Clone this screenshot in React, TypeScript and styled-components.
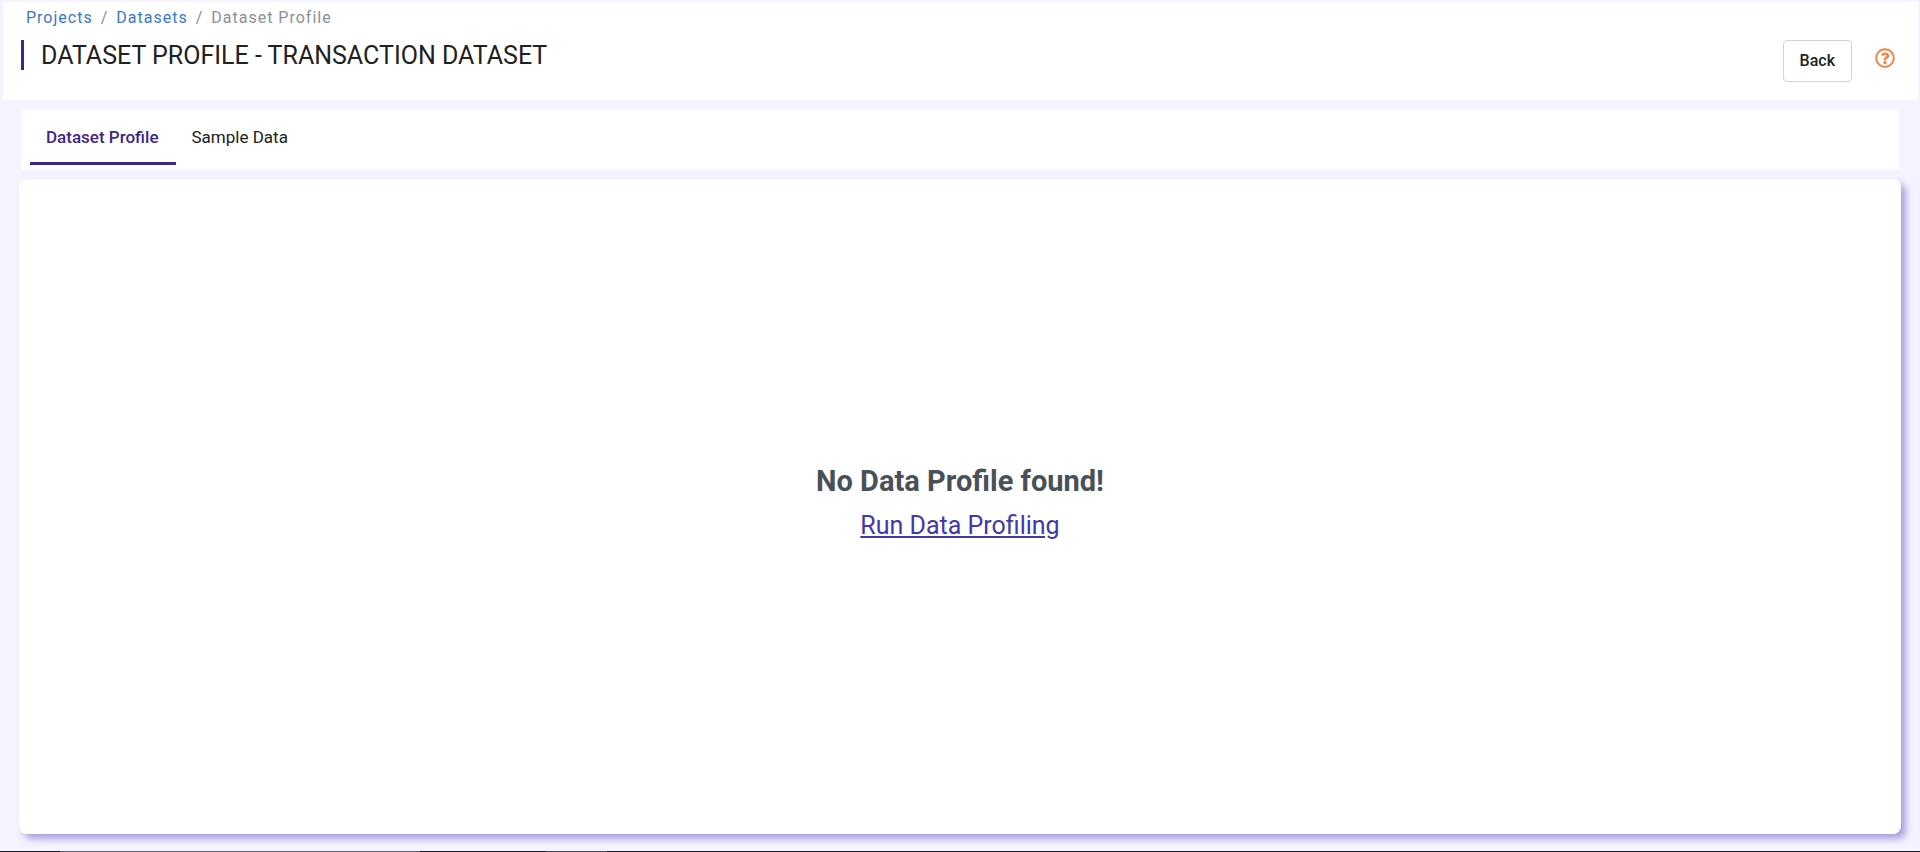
import React from "react";
import styled, { createGlobalStyle } from "styled-components";
import { FaRegQuestionCircle } from "react-icons/fa";

const GlobalStyle = createGlobalStyle`
  *, *::before, *::after { box-sizing: border-box; }
  body {
    margin: 0;
    background: #f5f3ff;
    color: #212121;
    font-family: Roboto, "Liberation Sans", sans-serif;
    font-size: 16px;
    line-height: 24px;
  }
`;

const Page = styled.div`
  display: flex;
  flex-direction: column;
  min-height: 100vh;
  padding-top: 2px;
`;

const Header = styled.header`
  display: flex;
  justify-content: space-between;
  height: 98px;
  margin: 0 2px 0 3px;
  padding: 4px 23px 0 18px;
  background: #fff;
`;

const Breadcrumb = styled.ol`
  display: flex;
  gap: 8px;
  margin: 0;
  padding: 0 0 0 5px;
  list-style: none;
  letter-spacing: 1px;
  color: #8a9097;
`;

const Crumb = styled.li`
  display: flex;
  gap: 8px;

  & + &::before { content: "/"; }
`;

const CrumbLink = styled.a`
  color: #3a77c9;
  text-decoration: none;
`;

const Title = styled.h1`
  margin: 10px 0 0;
  padding: 1px 0 0 17px;
  border-left: 3px solid #3f2687;
  font-size: 25px;
  font-weight: 400;
  line-height: 29px;
`;

const Actions = styled.div`
  display: flex;
  align-items: flex-start;
  gap: 23px;
  padding-top: 34px;
`;

const BackButton = styled.button`
  height: 42px;
  padding: 0 16px;
  border: 1px solid #ced4da;
  border-radius: 4px;
  background: #fff;
  color: #212121;
  font: 500 16px/24px Roboto, sans-serif;
`;

const HelpButton = styled.button`
  display: flex;
  margin-top: 8px;
  padding: 0;
  border: 0;
  background: none;
  color: #fb7e3f;
  font-size: 20px;
`;

const Tabs = styled.nav`
  display: flex;
  height: 61px;
  margin: 9px 21px;
  padding: 0 9px;
  border-radius: 4px;
  background: #fff;
`;

const Tab = styled.a<{ $active?: boolean }>`
  height: 56px;
  padding: 16px 17px 0 16px;
  border-bottom: 3px solid ${(p) => (p.$active ? "#3f2687" : "transparent")};
  color: ${(p) => (p.$active ? "#3f2687" : "#212121")};
  font-size: 17px;
  font-weight: ${(p) => (p.$active ? 500 : 400)};
  text-decoration: none;
`;

const Panel = styled.main`
  display: flex;
  flex: 1;
  flex-direction: column;
  align-items: center;
  justify-content: center;
  gap: 9px;
  margin: 0 19px 17px;
  padding-bottom: 6px;
  border-radius: 8px;
  background: #fff;
  box-shadow: 5px 5px 7px #aaa0df;
`;

const EmptyTitle = styled.h2`
  margin: 0;
  color: #495057;
  font-size: 29px;
  font-weight: 700;
  line-height: 36px;
`;

const RunLink = styled.a`
  color: #4338a8;
  font-size: 25px;
  line-height: 36px;
`;

const BottomStrip = styled.footer`
  height: 1px;
  background: linear-gradient(
    90deg,
    #1c1826 60px,
    #65616c 60px 420px,
    #1c1826 420px 546px,
    #4b4752 546px 607px,
    #1c1826 607px
  );
`;

export default function App() {
  return (
    <Page>
      <GlobalStyle />
      <Header>
        <div>
          <nav aria-label="Breadcrumb">
            <Breadcrumb>
              <Crumb><CrumbLink href="#projects">Projects</CrumbLink></Crumb>
              <Crumb><CrumbLink href="#datasets">Datasets</CrumbLink></Crumb>
              <Crumb aria-current="page">Dataset Profile</Crumb>
            </Breadcrumb>
          </nav>
          <Title>DATASET PROFILE - TRANSACTION DATASET</Title>
        </div>
        <Actions>
          <BackButton type="button">Back</BackButton>
          <HelpButton type="button" aria-label="Help">
            <FaRegQuestionCircle />
          </HelpButton>
        </Actions>
      </Header>
      <Tabs aria-label="Dataset views">
        <Tab href="#profile" $active aria-current="page">Dataset Profile</Tab>
        <Tab href="#sample">Sample Data</Tab>
      </Tabs>
      <Panel>
        <EmptyTitle>No Data Profile found!</EmptyTitle>
        <RunLink href="#run">Run Data Profiling</RunLink>
      </Panel>
      <BottomStrip />
    </Page>
  );
}
